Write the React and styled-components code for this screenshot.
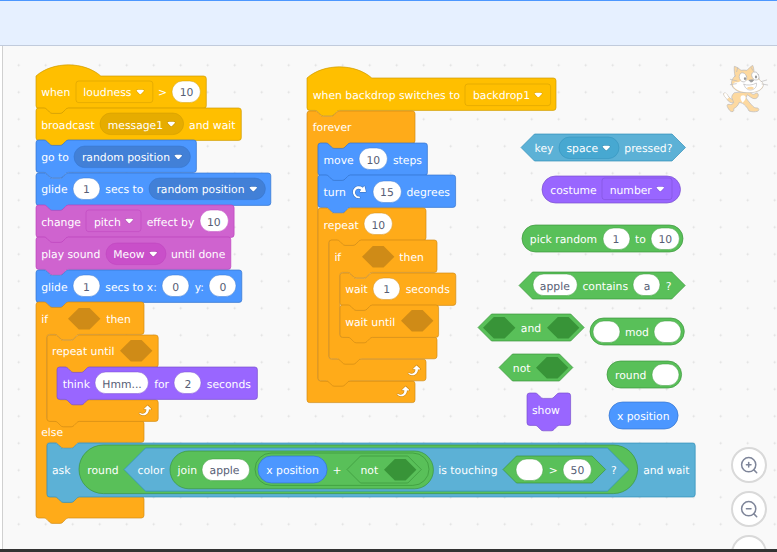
import React from 'react';
import styled, { createGlobalStyle } from 'styled-components';

const SCALE = 0.675;
const u = (n) => `${+(n * SCALE).toFixed(4)}px`;

const palettes = {
  motion: ['#4c97ff', '#4280d7', '#3373cc'],
  looks: ['#9966ff', '#855cd6', '#774dcb'],
  sound: ['#cf63cf', '#c94fc9', '#bd42bd'],
  events: ['#ffbf00', '#e6ac00', '#cc9900'],
  control: ['#ffab19', '#ec9c13', '#cf8b17'],
  sensing: ['#5cb1d6', '#47a8d1', '#2e8eb8'],
  operators: ['#59c059', '#46b946', '#389438'],
};

/* ---------- outlines, in block units ---------- */

const NOTCH = 'c2,0 3,1 4,2 l4,4 c1,1 2,2 4,2 h12 c2,0 3,-1 4,-2 l4,-4 c1,-1 2,-2 4,-2';
const TAB = 'c-2,0 -3,1 -4,2 l-4,4 c-1,1 -2,2 -4,2 h-12 c-2,0 -3,-1 -4,-2 l-4,-4 c-1,-1 -2,-2 -4,-2';
const TOP = `M0,4 a4,4 0 0,1 4,-4 H12 ${NOTCH}`;

const outlines = {
  stack: (w, h) => `${TOP} H${w - 4} a4,4 0 0,1 4,4 V${h - 4} a4,4 0 0,1 -4,4 H48 ${TAB} H4 a4,4 0 0,1 -4,-4 z`,
  hat: (w, h) => `M0,0 c25,-22 71,-22 96,0 H${w - 4} a4,4 0 0,1 4,4 V${h - 4} a4,4 0 0,1 -4,4 H48 ${TAB} H4 a4,4 0 0,1 -4,-4 z`,
  round: (w, h) => `M${h / 2},0 H${w - h / 2} a${h / 2},${h / 2} 0 0,1 0,${h} H${h / 2} a${h / 2},${h / 2} 0 0,1 0,${-h} z`,
  hex: (w, h) => `M${h / 2},0 H${w - h / 2} L${w},${h / 2} L${w - h / 2},${h} H${h / 2} L0,${h / 2} z`,
  square: (w, h) => `M4,0 H${w - 4} a4,4 0 0,1 4,4 V${h - 4} a4,4 0 0,1 -4,4 H4 a4,4 0 0,1 -4,-4 V4 a4,4 0 0,1 4,-4 z`,
};

function clampOutline(w, mouths, cap) {
  let d = `${TOP} H${w - 4} a4,4 0 0,1 4,4`;
  let y = 48;
  mouths.forEach((m) => {
    d += ` V${y - 4} a4,4 0 0,1 -4,4 H64 ${TAB} H20 a4,4 0 0,0 -4,4`;
    y += m;
    d += ` V${y - 4} a4,4 0 0,0 4,4 H${w - 4} a4,4 0 0,1 4,4`;
    y += 32;
  });
  return `${d} V${y - 4} a4,4 0 0,1 -4,4 ${cap ? '' : `H48 ${TAB}`} H4 a4,4 0 0,1 -4,-4 z`;
}

/* ---------- styled parts ---------- */

const GlobalStyle = createGlobalStyle`
  body {
    margin: 0;
    overflow: hidden;
    background: #fff;
  }
`;

const Page = styled.div`
  display: flex;
  flex-direction: column;
  height: 552px;
  width: 777px;
  overflow: hidden;
  font-family: 'DejaVu Sans', sans-serif;
  font-size: 10.8px;
  text-rendering: geometricPrecision;
`;

const Toolbar = styled.div`
  box-sizing: border-box;
  flex: 0 0 46px;
  background: #e6f0ff;
  border-top: 1px solid #4c97ff;
  border-bottom: 1px solid #c1cbdc;
`;

const Workspace = styled.main`
  position: relative;
  flex: 1;
  margin-left: 2px;
  overflow: hidden;
  border-left: 1px solid #d0d0d0;
  background-color: #f9f9f9;
  background-image: radial-gradient(circle at 50% 50%, #dedede 0.7px, transparent 1.3px);
  background-size: 27px 27px;
  background-position: 2.2px 5.7px;
`;

const Taskbar = styled.div`
  flex: 0 0 3px;
  background: #333;
`;

const Script = styled.div`
  position: absolute;
  left: ${(p) => p.$x - 3}px;
  top: ${(p) => p.$y - 46}px;
  display: flex;
  flex-direction: column;
  align-items: flex-start;
`;

const BlockBox = styled.div`
  --fill: ${(p) => palettes[p.$kind][0]};
  --deep: ${(p) => palettes[p.$kind][1]};
  --line: ${(p) => palettes[p.$kind][2]};
  position: relative;
  flex: none;
  box-sizing: border-box;
  display: flex;
  flex-direction: ${(p) => (p.$column ? 'column' : 'row')};
  align-items: ${(p) => (p.$column ? 'flex-start' : 'center')};
  gap: ${(p) => (p.$column ? 0 : u(8))};
  width: ${(p) => p.$w}px;
  ${(p) => (p.$h ? `height: ${u(p.$h)};` : '')}
  padding-left: ${(p) => p.$pad}px;
`;

const Outline = styled.svg`
  position: absolute;
  left: 0;
  top: 0;
  overflow: visible;
  pointer-events: none;
  path {
    stroke: var(--line);
    stroke-width: 1;
    fill: ${(p) => ({ block: 'var(--fill)', input: '#fff', hole: 'var(--line)', menu: 'var(--deep)', field: 'var(--fill)' }[p.$tone])};
    ${(p) => (p.$tone === 'hole' ? 'stroke: none;' : '')}
    ${(p) => (p.$tone === 'block' || p.$tone === 'hole' ? '' : 'stroke-opacity: 0.7;')}
  }
`;

const Row = styled.div`
  position: relative;
  display: flex;
  align-items: center;
  gap: ${u(8)};
  height: ${(p) => u(p.$h)};
  padding-left: ${u(8)};
`;

const Mouth = styled.div`
  padding-left: ${u(16)};
  height: ${(p) => u(p.$h)};
  display: flex;
  flex-direction: column;
  align-items: flex-start;
`;

const Foot = styled.div`
  position: relative;
  box-sizing: border-box;
  display: flex;
  align-items: center;
  justify-content: flex-end;
  width: 100%;
  height: ${u(32)};
  padding-right: ${u(8)};
`;

const Label = styled.span`
  position: relative;
  flex: none;
  line-height: 14px;
  padding-top: 3px;
  white-space: pre;
  color: #fff;
  ${(p) => (p.$w ? `width: ${p.$w}px;` : '')}
`;

const Slot = styled.span`
  position: relative;
  flex: none;
  box-sizing: border-box;
  display: flex;
  align-items: center;
  justify-content: ${(p) => (p.$spread ? 'space-between' : 'center')};
  width: ${(p) => p.$w}px;
  height: ${u(32)};
  padding: ${(p) => (p.$spread ? '0 7.9px 0 7.7px' : '0')};
  ${(p) => (p.$spread ? 'margin: 0 0.1px 0 -0.1px;' : '')}
`;

const Value = styled.span`
  position: relative;
  line-height: 14px;
  padding-top: 3px;
  white-space: pre;
  color: #575e75;
`;

const Glyph = styled.svg`
  position: relative;
  flex: none;
  display: block;
`;

const Sprite = styled.svg`
  position: absolute;
  left: 719px;
  top: 17.3px;
  width: 48.33px;
  height: 50.67px;
`;

const Controls = styled.div`
  position: absolute;
  left: 728px;
  top: 401px;
  display: flex;
  flex-direction: column;
  gap: 8.1px;
`;

const RoundButton = styled.button`
  display: flex;
  align-items: center;
  justify-content: center;
  box-sizing: border-box;
  width: 36px;
  height: 36px;
  padding: 0;
  border: 2px solid #d9d9d9;
  border-radius: 50%;
  background: #fff;
`;

/* ---------- components ---------- */

function Shape({ d, tone = 'block' }) {
  return (
    <Outline width="1" height="1" $tone={tone}>
      <g transform={`scale(${SCALE})`}>
        <path d={d} />
      </g>
    </Outline>
  );
}

function Block({ kind, shape = 'stack', w, h = shape === 'stack' || shape === 'hat' ? 48 : 40, pad = 5.4, children }) {
  return (
    <BlockBox $kind={kind} $w={w} $h={h} $pad={pad}>
      <Shape d={outlines[shape](w / SCALE, h)} />
      {children}
    </BlockBox>
  );
}

function Clamp({ head, parts, cap, loop }) {
  const width = parts.w || 108;
  return (
    <BlockBox $kind="control" $w={width} $pad={0} $column>
      <Shape d={clampOutline(width / SCALE, parts.mouths, cap)} />
      <Row $h={48}>{head}</Row>
      <Mouth $h={parts.mouths[0]}>{parts.body}</Mouth>
      {parts.mouths.length > 1 && (
        <>
          <Row $h={32}><Label>else</Label></Row>
          <Mouth $h={parts.mouths[1]}>{parts.other}</Mouth>
        </>
      )}
      <Foot>{loop && <LoopArrow />}</Foot>
    </BlockBox>
  );
}

function Input({ w = 27, children }) {
  return (
    <Slot $w={w}>
      <Shape tone="input" d={outlines.round(w / SCALE, 32)} />
      <Value>{children}</Value>
    </Slot>
  );
}

function Hole() {
  return (
    <Slot $w={32.4}>
      <Shape tone="hole" d={outlines.hex(48, 32)} />
    </Slot>
  );
}

function Menu({ w, square, children }) {
  return (
    <Slot $w={w} $spread>
      <Shape tone={square ? 'field' : 'menu'} d={outlines[square ? 'square' : 'round'](w / SCALE, 32)} />
      <Label>{children}</Label>
      <Glyph width={8.58} height={5.93} viewBox="0 0 12.71 8.79">
        <path fillOpacity=".1" d="M12.71,2.44A2.41,2.41,0,0,1,12,4.16L8.08,8.08a2.45,2.45,0,0,1-3.45,0L0.72,4.16A2.42,2.42,0,0,1,0,2.44,2.48,2.48,0,0,1,.71.71C1,0.47,1.43,0,6.36,0S11.75,0.46,12,.71A2.44,2.44,0,0,1,12.71,2.44Z" />
        <path fill="#fff" d="M6.36,7.79a1.43,1.43,0,0,1-1-.42L1.42,3.45a1.44,1.44,0,0,1,0-2c0.56-.56,9.31-0.56,9.87,0a1.44,1.44,0,0,1,0,2L7.37,7.37A1.43,1.43,0,0,1,6.36,7.79Z" />
      </Glyph>
    </Slot>
  );
}

function LoopArrow() {
  return (
    <Glyph width={16.2} height={16.2} viewBox="0 0 24 24">
      <path fill="#cf8b17" d="M23.3,11c-0.3,0.6-0.9,1-1.5,1h-1.6c-0.1,1.3-0.5,2.5-1.1,3.6c-0.9,1.7-2.3,3.2-4.1,4.1c-1.7,0.9-3.6,1.2-5.5,0.9c-1.8-0.3-3.5-1.1-4.9-2.3c-0.7-0.7-0.7-1.9,0-2.6c0.6-0.6,1.6-0.7,2.3-0.2H7c0.9,0.6,1.9,0.9,2.9,0.9s1.9-0.3,2.7-0.9c1.1-0.8,1.8-2.1,1.8-3.5h-1.5c-0.9,0-1.7-0.7-1.7-1.7c0-0.4,0.2-0.9,0.5-1.2l4.4-4.4c0.7-0.6,1.7-0.6,2.4,0L23,9.2C23.5,9.7,23.6,10.4,23.3,11z" />
      <path fill="#fff" d="M21.8,11h-2.6c0,1.5-0.3,2.9-1,4.2c-0.8,1.6-2.1,2.8-3.7,3.6c-1.5,0.8-3.3,1.1-4.9,0.8c-1.6-0.2-3.2-1-4.4-2.1c-0.4-0.3-0.4-0.9-0.1-1.2c0.3-0.4,0.9-0.4,1.2-0.1l0,0c1,0.7,2.2,1.1,3.4,1.1s2.3-0.3,3.3-1c0.9-0.6,1.6-1.5,2-2.6c0.3-0.9,0.4-1.8,0.2-2.8h-2.4c-0.4,0-0.7-0.3-0.7-0.7c0-0.2,0.1-0.3,0.2-0.4l4.4-4.4c0.3-0.3,0.7-0.3,0.9,0L22,9.8c0.3,0.3,0.4,0.6,0.3,0.9S22,11,21.8,11z" />
    </Glyph>
  );
}

function TurnArrow() {
  return (
    <Glyph width={16.2} height={16.2} viewBox="0 0 24 24">
      <path fill="#3d79cc" d="M22.68,12.2a1.6,1.6,0,0,1-1.27.63H13.72a1.59,1.59,0,0,1-1.16-2.58l1.12-1.41a4.82,4.82,0,0,0-3.14-.77,4.31,4.31,0,0,0-2,.8,4.25,4.25,0,0,0-1.34,1.73,5.06,5.06,0,0,0,.54,4.62A5.58,5.58,0,0,0,12,17.74h0a2.26,2.26,0,0,1-.16,4.52A10.25,10.25,0,0,1,3.74,18,10.14,10.14,0,0,1,2.25,8.78,9.7,9.7,0,0,1,5.08,4.64,9.92,9.92,0,0,1,9.66,2.5a10.66,10.66,0,0,1,7.72,1.68l1.08-1.35a1.57,1.57,0,0,1,1.24-.6,1.6,1.6,0,0,1,1.54,1.21l1.7,7.37A1.57,1.57,0,0,1,22.68,12.2Z" />
      <path fill="#fff" d="M21.38,11.83H13.77a.59.59,0,0,1-.43-1l1.75-2.19a5.9,5.9,0,0,0-4.7-1.58,5.07,5.07,0,0,0-4.11,3.17A6,6,0,0,0,7,15.77a6.51,6.51,0,0,0,5,2.92,1.31,1.31,0,0,1-.08,2.62,9.3,9.3,0,0,1-7.35-3.82A9.16,9.16,0,0,1,3.17,9.12,8.51,8.51,0,0,1,5.71,5.4,8.76,8.76,0,0,1,9.82,3.48a9.71,9.71,0,0,1,7.75,2.07l1.67-2.1a.59.59,0,0,1,1,.21L22,11.08A.59.59,0,0,1,21.38,11.83Z" />
    </Glyph>
  );
}

function ZoomButton({ sign, label }) {
  return (
    <RoundButton aria-label={label}>
      <Glyph width="18" height="18" viewBox="0 0 18 18" fill="none" stroke="#7e8599" strokeWidth="1.5" strokeLinecap="round">
        {sign === 'reset' ? (
          <path d="M5.5 7.5h7M5.5 10.5h7" />
        ) : (
          <>
            <circle cx="8.7" cy="8.7" r="7.1" />
            <path d="M13.9 13.9l2.8 2.8M6.4 8.7h4.6" />
            {sign === 'in' && <path d="M8.7 6.4v4.6" />}
          </>
        )}
      </Glyph>
    </RoundButton>
  );
}

function Cat() {
  return (
    <Sprite viewBox="636 70 145 152" fill="none" stroke="#bdbcbd" strokeWidth="2.2" strokeLinejoin="round" strokeLinecap="round">
      <path fill="#fdd9a0" d="M670 189c-7 2-14-2-19-10-4-6-9-10-10-15-1-5 5-6 9-1 5 6 9 14 15 15 5 1 8-1 12-3z" />
      <path fill="#fff" stroke="none" d="M642 162c3-4 7-1 9 3 2 3 4 6 6 9l-6 4c-4-6-9-10-9-16z" />
      <path fill="#fdd9a0" d="M672 160c-6 6-9 13-5 18l4 10c-2 6-8 8-14 6-7-1-7 5-3 11 3 5 6 10 11 11 7 1 7-5 6-9 8-4 14-10 16-18 8-1 14 4 20 10 4 5 8 9 10 15 8 3 18 3 25 1 7-3 5-10-1-10-6 0-9-2-12-5-9-9-15-17-21-25l4-10c6 4 13 11 20 12 8 1 13-5 13-11 0-6-6-8-10-4-5 5-11 0-17-6z" />
      <path fill="#fff" stroke="none" d="M693 169c6-5 13-2 14 4 1 6-5 12-9 16-5-7-9-13-5-20z" />
      <path fill="#fdd9a0" d="M675 109c-2-9-3-21-2-29 8 2 14 7 20 12 6-1 13-1 18 0 5-5 10-11 17-15 3 7 4 14 4 21 10 6 16 14 16 23 5 2 11 8 12 15-1 12-14 20-32 22-24 3-47 1-59-15-8-11-5-24 6-34z" />
      <path fill="#fff" stroke="none" d="M735 119c10-2 23 7 24 17-2 11-15 19-32 21-22 2-40 0-52-11-7-7-8-12-3-16 7-4 14 0 18-5z" />
      <ellipse cx="699" cy="113" rx="11" ry="14" fill="#fff" transform="rotate(-18 699 113)" />
      <ellipse cx="736" cy="109" rx="10" ry="13" fill="#fff" transform="rotate(-25 736 109)" />
      <ellipse cx="705" cy="117" rx="3.4" ry="4.3" fill="#999" stroke="none" />
      <ellipse cx="738" cy="112" rx="3.4" ry="4.3" fill="#999" stroke="none" />
      <path fill="#999" stroke="#999" d="M718 122c4-2 9-2 13-1-2 4-4 6-7 6s-5-2-6-5z" />
      <path fill="#fff" d="M702 134c8 4 27 3 37-4 3 10-5 20-16 21-10 1-19-6-21-17z" />
      <path fill="#fdd9a0" stroke="none" d="M710 145c7-5 17-5 22 0-6 6-16 6-22 0z" />
      <path d="M681 124l-20-5M679 132l-18 3M753 126l17-5M756 133l17 3M683 84l-3 12M724 84l4 8" />
    </Sprite>
  );
}

function LeftScript() {
  return (
    <Script $x={35.8} $y={75.5}>
      <Block kind="events" shape="hat" w={170.3}>
        <Label>when</Label><Menu w={76.8} square>loudness</Menu><Label>{'>'}</Label><Input w={28.4}>10</Input>
      </Block>
      <Block kind="events" w={205.3}>
        <Label>broadcast</Label><Menu w={83.6}>message1</Menu><Label>and wait</Label>
      </Block>
      <Block kind="motion" w={160.4}>
        <Label>go to</Label><Menu w={116.4}>random position</Menu>
      </Block>
      <Block kind="motion" w={234.8}>
        <Label>glide</Label><Input>1</Input><Label>secs to</Label><Menu w={116.4}>random position</Menu>
      </Block>
      <Block kind="sound" w={198.1}>
        <Label>change</Label><Menu w={55} square>pitch</Menu><Label>effect by</Label><Input w={28.4}>10</Input>
      </Block>
      <Block kind="sound" w={194.8}>
        <Label>play sound</Label><Menu w={60}>Meow</Menu><Label>until done</Label>
      </Block>
      <Block kind="motion" w={205.8}>
        <Label>glide</Label><Input>1</Input><Label>secs to x:</Label><Input>0</Input><Label>y:</Label><Input>0</Input>
      </Block>
      <Clamp
        head={<><Label $w={21.8}>if</Label><Hole /><Label>then</Label></>}
        parts={{
          mouths: [128, 80],
          body: (
            <Clamp
              loop
              head={<><Label>repeat until</Label><Hole /></>}
              parts={{
                w: 111.2,
                mouths: [48],
                body: (
                  <Block kind="looks" w={200.4}>
                    <Label>think</Label><Input w={53.4}>Hmm...</Input><Label>for</Label><Input>2</Input><Label>seconds</Label>
                  </Block>
                ),
              }}
            />
          ),
          other: <AskBlock />,
        }}
      />
    </Script>
  );
}

function AskBlock() {
  return (
    <Block kind="sensing" w={648.2} h={80}>
      <Label $w={21.8}>ask</Label>
      <Block kind="operators" shape="round" w={558.6} h={72} pad={8.1}>
        <Label>round</Label>
        <Block kind="sensing" shape="hex" w={505} h={64} pad={13.5}>
          <Label>color</Label>
          <Block kind="operators" shape="round" w={263.4} h={56} pad={8.1}>
            <Label>join</Label>
            <Input w={47.6}>{'apple '}</Input>
            <Block kind="operators" shape="round" w={174} h={48} pad={2.7}>
              <Block kind="motion" shape="round" w={69.1} pad={8.1}><Label>x position</Label></Block>
              <Label>+</Label>
              <Block kind="operators" shape="hex" w={74.3} pad={13.5}><Label>not</Label><Hole /></Block>
            </Block>
          </Block>
          <Label>is touching</Label>
          <Block kind="operators" shape="hex" w={102.6} pad={13.5}>
            <Input>{' '}</Input><Label>{'>'}</Label><Input w={28.4}>50</Input>
          </Block>
          <Label>?</Label>
        </Block>
      </Block>
      <Label>and wait</Label>
    </Block>
  );
}

function BackdropScript() {
  return (
    <Script $x={307.4} $y={78.3}>
      <Block kind="events" shape="hat" w={249}>
        <Label>when backdrop switches to</Label><Menu w={85.6} square>backdrop1</Menu>
      </Block>
      <Clamp
        cap
        loop
        head={<Label>forever</Label>}
        parts={{
          mouths: [352],
          body: (
            <>
              <Block kind="motion" w={109.4}><Label>move</Label><Input w={28.4}>10</Input><Label>steps</Label></Block>
              <Block kind="motion" w={137.6}><Label>turn</Label><TurnArrow /><Input w={28.4}>15</Input><Label>degrees</Label></Block>
              <Clamp
                loop
                head={<><Label>repeat</Label><Input w={28.4}>10</Input></>}
                parts={{
                  mouths: [176],
                  body: (
                    <Clamp
                      head={<><Label $w={21.8}>if</Label><Hole /><Label>then</Label></>}
                      parts={{
                        mouths: [96],
                        body: (
                          <>
                            <Block kind="control" w={115.8}><Label>wait</Label><Input>1</Input><Label>seconds</Label></Block>
                            <Block kind="control" w={98.6}><Label>wait until</Label><Hole /></Block>
                          </>
                        ),
                      }}
                    />
                  ),
                }}
              />
            </>
          ),
        }}
      />
    </Script>
  );
}

export default function App() {
  return (
    <Page>
      <GlobalStyle />
      <Toolbar />
      <Workspace>
        <LeftScript />
        <BackdropScript />
        <Script $x={521.1} $y={134.3}>
          <Block kind="sensing" shape="hex" w={164.5} pad={13.5}>
            <Label>key</Label><Menu w={60}>space</Menu><Label>pressed?</Label>
          </Block>
        </Script>
        <Script $x={542.2} $y={175.6}>
          <Block kind="looks" shape="round" w={138.5} pad={8.1}>
            <Label>costume</Label><Menu w={70} square>number</Menu>
          </Block>
        </Script>
        <Script $x={521.7} $y={225}>
          <Block kind="operators" shape="round" w={161} pad={8.1}>
            <Label>pick random</Label><Input>1</Input><Label>to</Label><Input w={28.4}>10</Input>
          </Block>
        </Script>
        <Script $x={519.2} $y={271.5}>
          <Block kind="operators" shape="hex" w={166.2} pad={13.5}>
            <Input w={44.3}>apple</Input><Label>contains</Label><Input>a</Input><Label>?</Label>
          </Block>
        </Script>
        <Script $x={477.7} $y={314.2}>
          <Block kind="operators" shape="hex" w={106.2} pad={5.4}>
            <Hole /><Label>and</Label><Hole />
          </Block>
        </Script>
        <Script $x={589.9} $y={318}>
          <Block kind="operators" shape="round" w={94.3} pad={2.7}>
            <Input>{' '}</Input><Label>mod</Label><Input>{' '}</Input>
          </Block>
        </Script>
        <Script $x={499.3} $y={354.1}>
          <Block kind="operators" shape="hex" w={73.9} pad={13.5}>
            <Label>not</Label><Hole />
          </Block>
        </Script>
        <Script $x={606.9} $y={361.2}>
          <Block kind="operators" shape="round" w={74.6} pad={8.1}>
            <Label>round</Label><Input>{' '}</Input>
          </Block>
        </Script>
        <Script $x={526.6} $y={393.4}>
          <Block kind="looks" w={43.6}><Label>show</Label></Block>
        </Script>
        <Script $x={608.8} $y={402.2}>
          <Block kind="motion" shape="round" w={69.1} pad={8.1}><Label>x position</Label></Block>
        </Script>
        <Cat />
        <Controls>
          <ZoomButton sign="in" label="Zoom in" />
          <ZoomButton sign="out" label="Zoom out" />
          <ZoomButton sign="reset" label="Reset zoom" />
        </Controls>
      </Workspace>
      <Taskbar />
    </Page>
  );
}
